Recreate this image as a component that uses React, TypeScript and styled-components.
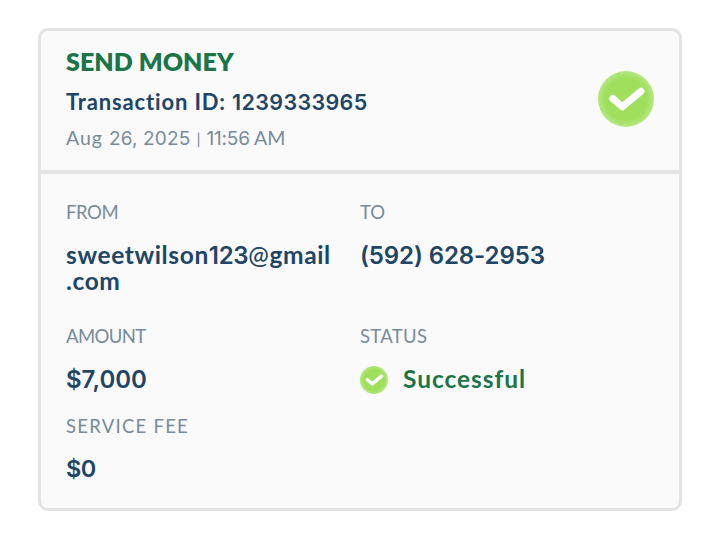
import React from "react";
import styled, { createGlobalStyle } from "styled-components";

const GlobalStyle = createGlobalStyle`
  * { box-sizing: border-box; }
  body {
    margin: 0;
    background: #fff;
    font-family: Lato, "Open Sans", sans-serif;
    font-variant-ligatures: none;
  }
`;

const Page = styled.main`
  width: 720px;
  height: 537px;
  padding: 28px 38px 26px;
`;

const Card = styled.section`
  height: 483px;
  border: 3px solid #e3e3e3;
  border-radius: 10px;
  background: #fafafa;
  overflow: hidden;
`;

const Header = styled.header`
  display: flex;
  justify-content: space-between;
  height: 143px;
  padding: 15px 25px 0;
  border-bottom: 4px solid #e3e3e3;
`;

const HeaderIcon = styled.div`
  padding-top: 25px;
`;

const Title = styled.h1`
  margin: 0;
  font-size: 25px;
  line-height: 30px;
  font-weight: 800;
  color: #1c7549;
  letter-spacing: 0.05px;
  white-space: nowrap;
`;

const Transaction = styled.div`
  margin-top: 11px;
  font-size: 22px;
  line-height: 30px;
  font-weight: 600;
  color: #214565;
  white-space: nowrap;
`;

const Stamp = styled.div`
  margin-top: 6px;
  font-size: 19.5px;
  line-height: 30px;
  color: #778b9c;
  white-space: nowrap;
`;

const Digits = styled.span<{ $size: number; $ls?: number }>`
  font-family: Inter, "Open Sans", sans-serif;
  font-size: ${(p) => p.$size}px;
  letter-spacing: ${(p) => p.$ls ?? 0}px;
`;

const Spaced = styled.span<{ $ls: number }>`
  font-weight: 700;
  letter-spacing: ${(p) => p.$ls}px;
`;

const Month = styled.span`
  letter-spacing: 1px;
`;

const Bar = styled.span`
  margin: 0 1px;
  font-size: 16px;
  vertical-align: 1px;
`;

const Details = styled.div`
  display: grid;
  grid-template-columns: 294px 1fr;
  grid-template-rows: 124px 90px 90px;
  padding: 26px 25px 0;
`;

const Label = styled.div<{ $ls?: number }>`
  font-size: 18.5px;
  line-height: 24px;
  color: #778b9c;
  letter-spacing: ${(p) => p.$ls ?? 0}px;
`;

const Value = styled.div<{ $success?: boolean; $top?: number }>`
  display: flex;
  align-items: center;
  height: 26px;
  margin-top: ${(p) => p.$top ?? 19}px;
  font-size: 24px;
  line-height: 26px;
  font-weight: 600;
  color: ${(p) => (p.$success ? "#1c7549" : "#214565")};
  gap: 15px;
  white-space: nowrap;
`;

const Email = styled.div`
  height: 52px;
  margin-top: 18px;
  font-size: 24.5px;
  line-height: 26px;
  font-weight: 700;
  color: #214565;
  letter-spacing: 0.62px;
  white-space: nowrap;
`;

const EmailLine = styled.div`
  height: 26px;
`;

const EmailDigits = styled(Digits)`
  font-weight: 600;
`;

const AtSign = styled.span`
  font-weight: 500;
`;

const StatusText = styled.span`
  font-size: 24.5px;
  font-weight: 700;
  letter-spacing: 0.95px;
  padding-bottom: 3px;
`;

const StatusCheck = styled.span`
  display: block;
  margin-top: -1px;
`;

const Badge = styled.svg`
  display: block;
  flex: none;
`;

function Check({ size }: { size: number }) {
  return (
    <Badge width={size} height={size} viewBox="0 0 56 56" fill="none">
      <defs>
        <radialGradient id={`ring${size}`}>
          <stop offset="0.74" stopColor="#9fdf5c" />
          <stop offset="0.9" stopColor="#ace573" />
          <stop offset="1" stopColor="#b5e884" />
        </radialGradient>
      </defs>
      <circle cx="28" cy="28" r="28" fill={`url(#ring${size})`} />
      <path d="M14.8 27.5 L24.4 35.8 L43 20.2" stroke="#fff" strokeWidth="7" strokeLinecap="round" strokeLinejoin="round" />
    </Badge>
  );
}

export default function App() {
  return (
    <Page>
      <GlobalStyle />
      <Card>
        <Header>
          <div>
            <Title>SEND MONEY</Title>
            <Transaction>
              <Spaced $ls={0.85}>Transaction ID: </Spaced>
              <Digits $size={21.5} $ls={0.35}>1239333965</Digits>
            </Transaction>
            <Stamp>
              <Month>Aug </Month>
              <Digits $size={19} $ls={0.15}>26, 2025</Digits> <Bar>|</Bar> <Digits $size={19} $ls={-0.2}>11:56</Digits> AM
            </Stamp>
          </div>
          <HeaderIcon><Check size={56} /></HeaderIcon>
        </Header>
        <Details>
          <div>
            <Label $ls={-0.4}>FROM</Label>
            <Email>
              <EmailLine>
                sweetwilson<EmailDigits $size={24} $ls={-0.3}>123</EmailDigits><AtSign>@</AtSign>gmail
              </EmailLine>
              <EmailLine>.com</EmailLine>
            </Email>
          </div>
          <div>
            <Label>TO</Label>
            <Value><Digits $size={24} $ls={-0.1}>(592) 628-2953</Digits></Value>
          </div>
          <div>
            <Label $ls={-0.6}>AMOUNT</Label>
            <Value><Digits $size={24}>$7,000</Digits></Value>
          </div>
          <div>
            <Label $ls={0.3}>STATUS</Label>
            <Value $success>
              <StatusCheck><Check size={28} /></StatusCheck>
              <StatusText>Successful</StatusText>
            </Value>
          </div>
          <div>
            <Label $ls={1.25}>SERVICE FEE</Label>
            <Value $top={18}><Digits $size={23.5} $ls={-0.5}>$0</Digits></Value>
          </div>
        </Details>
      </Card>
    </Page>
  );
}
